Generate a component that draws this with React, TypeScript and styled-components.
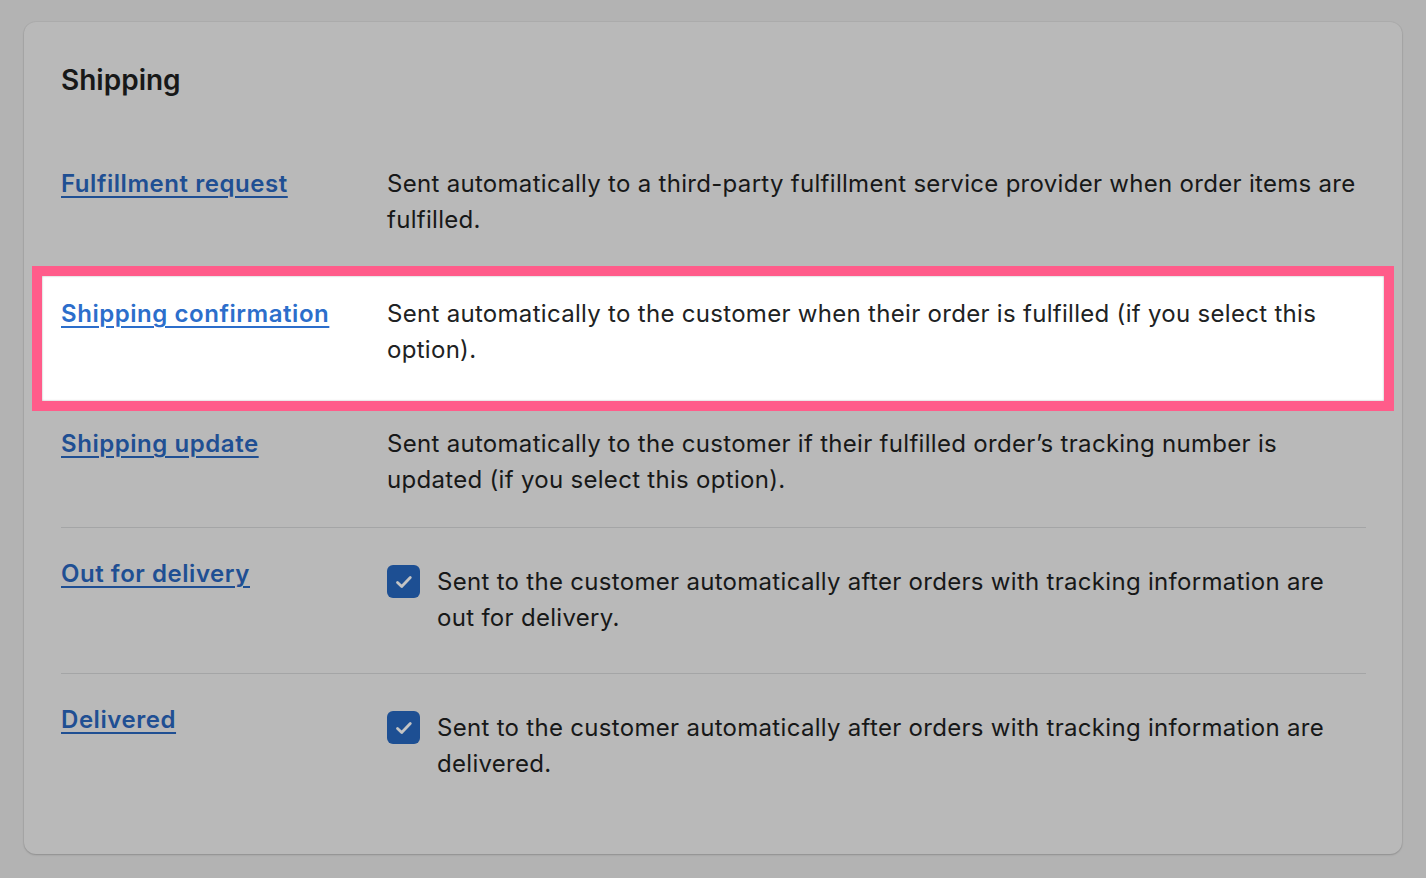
import styled, { createGlobalStyle } from "styled-components";

const GlobalStyle = createGlobalStyle`
    html, body {
        margin: 0;
        padding: 0;
        background: #b3b3b3;
    }
    body {
        font-family: Inter, "Noto Sans", "Liberation Sans", sans-serif;
        color: #1a1b1b;
        -webkit-font-smoothing: antialiased;
    }
`;

const Page = styled.div`
    padding: 22px 24px;
    min-height: 878px;
    box-sizing: border-box;
`;

const Card = styled.section`
    background: #b9b9b9;
    border-radius: 12px;
    padding: 40px 36px 35px 37px;
    box-shadow: 0 1px 2px rgba(0, 0, 0, 0.18), 0 0 0 1px rgba(0, 0, 0, 0.03);
`;

const Title = styled.h2`
    margin: 0 0 40px;
    font-size: 28px;
    line-height: 36px;
    font-weight: 600;
    color: #171818;
`;

const Row = styled.div<{ $highlight?: boolean; $last?: boolean }>`
    position: relative;
    display: grid;
    grid-template-columns: 326px 1fr;
    padding: 28px 0 29px;
    border-bottom: ${(p) => (p.$last ? "none" : "1px solid #a4a5a6")};
    font-size: 24px;
    line-height: 36px;
    z-index: 0;

    ${(p) =>
        p.$highlight &&
        `
        border-bottom-color: #dfe1e3;
        &::before {
            content: "";
            position: absolute;
            top: -2px;
            bottom: -14px;
            left: -29px;
            right: -28px;
            background: #ffffff;
            border: 10px solid #ff5c8a;
            box-shadow: inset 0 0 2px rgba(0, 0, 0, 0.35);
            z-index: -1;
        }
    `}
`;

const Label = styled.a<{ $highlight?: boolean }>`
    justify-self: start;
    color: ${(p) => (p.$highlight ? "#2c6ecb" : "#1f4f93")};
    font-weight: 600;
    letter-spacing: 0.55px;
    text-decoration: underline;
    text-decoration-thickness: 2px;
    text-underline-offset: 4px;
    cursor: pointer;
`;

const Description = styled.div<{ $highlight?: boolean }>`
    color: ${(p) => (p.$highlight ? "#202223" : "#171818")};
    letter-spacing: 0.3px;
`;

const CheckRow = styled.label`
    display: flex;
    align-items: flex-start;
    gap: 17px;
    padding: 8px 0;
    color: #171818;
    letter-spacing: 0.3px;
`;

const Checkbox = styled.span`
    flex: none;
    width: 33px;
    height: 33px;
    margin-top: 1px;
    border-radius: 6px;
    background: #1d4f93;
    display: flex;
    align-items: center;
    justify-content: center;
`;

function Check() {
    return (
        <Checkbox>
            <svg width="24" height="24" viewBox="0 0 24 24" fill="none">
                <path
                    d="M5.5 12.5l4.2 4 8.6-9"
                    stroke="#c4c4c4"
                    strokeWidth="2.8"
                    strokeLinecap="round"
                    strokeLinejoin="round"
                />
            </svg>
        </Checkbox>
    );
}

const rows = [
    {
        label: "Fulfillment request",
        text: "Sent automatically to a third-party fulfillment service provider when order items are fulfilled.",
    },
    {
        label: "Shipping confirmation",
        text: "Sent automatically to the customer when their order is fulfilled (if you select this option).",
        highlight: true,
    },
    {
        label: "Shipping update",
        text: "Sent automatically to the customer if their fulfilled order\u2019s tracking number is updated (if you select this option).",
    },
    {
        label: "Out for delivery",
        text: "Sent to the customer automatically after orders with tracking information are out for delivery.",
        checkbox: true,
    },
    {
        label: "Delivered",
        text: "Sent to the customer automatically after orders with tracking information are delivered.",
        checkbox: true,
    },
];

function App() {
    return (
        <>
            <GlobalStyle />
            <Page>
                <Card>
                    <Title>Shipping</Title>
                    {rows.map((r, i) => (
                        <Row key={r.label} $highlight={r.highlight} $last={i === rows.length - 1}>
                            <div>
                                <Label $highlight={r.highlight}>{r.label}</Label>
                            </div>
                            {r.checkbox ? (
                                <CheckRow>
                                    <Check />
                                    <span>{r.text}</span>
                                </CheckRow>
                            ) : (
                                <Description $highlight={r.highlight}>{r.text}</Description>
                            )}
                        </Row>
                    ))}
                </Card>
            </Page>
        </>
    );
}

export default App;
